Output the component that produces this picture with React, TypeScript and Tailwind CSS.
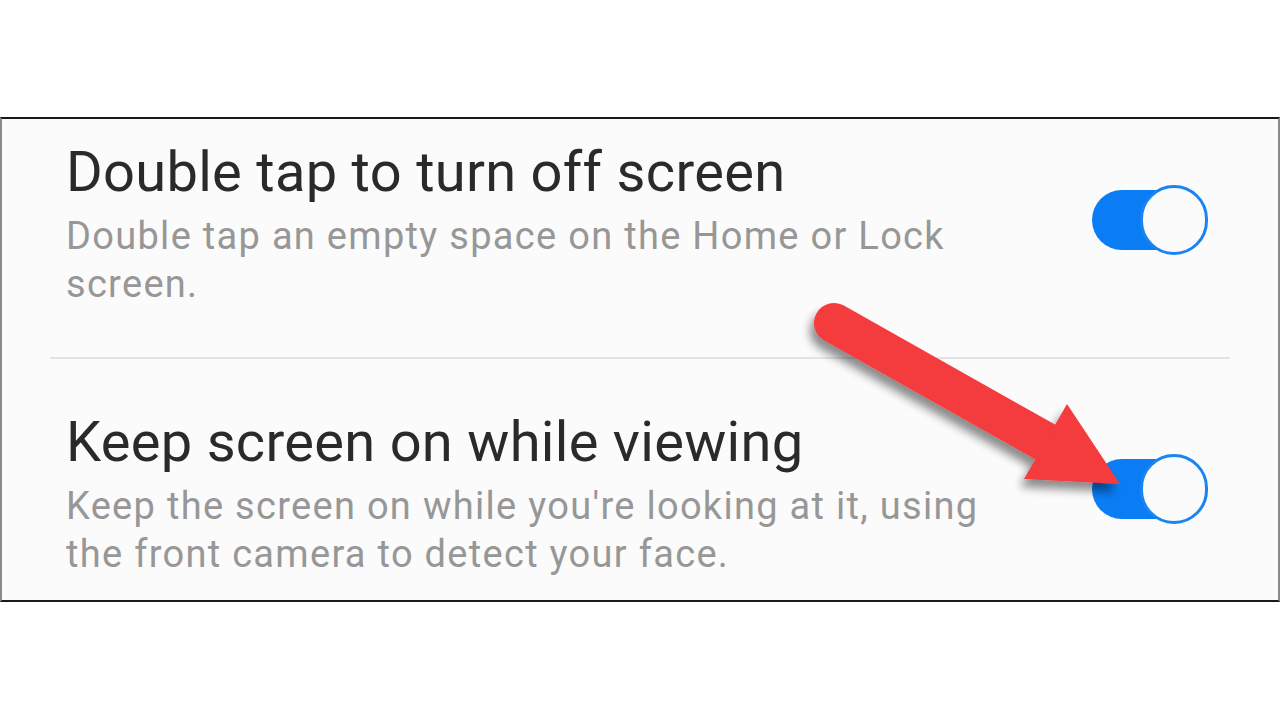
import React from "react";

function Toggle() {
  return (
    <div className="relative w-[116px] h-[70px] flex items-center">
      <div className="w-[100px] h-[60px] rounded-full bg-[#0a7df5]" />
      <div className="absolute right-0 top-0 w-[68px] h-[70px] rounded-full bg-[#fbfbfb] border-[3px] border-[#1a84f2]" />
    </div>
  );
}

export default function App() {
  return (
    <div className="w-[1280px] h-[719px] bg-white flex flex-col pt-[117px]" style={{ fontFamily: "Roboto, 'Noto Sans', sans-serif" }}>
      <div className="relative h-[485px] border-y-[2px] border-[#1a1a1a] border-x-[2px] border-x-[#8a8a8a] bg-[#fbfbfb] flex flex-col">
        <div className="h-[238px] flex items-start justify-between pt-[20px] pl-[64px] pr-[70px]">
          <div className="flex flex-col">
            <div className="text-[56px] leading-[66px] tracking-[0.3px] text-[#2a2a2a]">Double tap to turn off screen</div>
            <div className="text-[38px] leading-[48px] tracking-[1.3px] text-[#979797] mt-[7px]">
              <div>Double tap an empty space on the Home or Lock</div>
              <div>screen.</div>
            </div>
          </div>
          <div className="mt-[46px]"><Toggle /></div>
        </div>
        <div className="mx-[48px] h-[2px] bg-[#e4e4e4]" />
        <div className="flex-1 flex items-start justify-between pt-[50px] pl-[64px] pr-[70px]">
          <div className="flex flex-col">
            <div className="text-[56px] leading-[66px] tracking-[0.3px] text-[#2a2a2a]">Keep screen on while viewing</div>
            <div className="text-[38px] leading-[48px] tracking-[1.3px] text-[#979797] mt-[7px]">
              <div>Keep the screen on while you're looking at it, using</div>
              <div>the front camera to detect your face.</div>
            </div>
          </div>
          <div className="mt-[45px]"><Toggle /></div>
        </div>
        <svg className="absolute left-0 top-0 pointer-events-none" width="1280" height="485" viewBox="0 118 1280 485">
          <defs>
            <filter id="sh" x="-20%" y="-20%" width="140%" height="140%">
              <feGaussianBlur in="SourceAlpha" stdDeviation="5" />
              <feOffset dx="-4" dy="8" />
              <feComponentTransfer><feFuncA type="linear" slope="0.45" /></feComponentTransfer>
              <feMerge><feMergeNode /><feMergeNode in="SourceGraphic" /></feMerge>
            </filter>
          </defs>
          <g filter="url(#sh)">
            <line x1="832" y1="322" x2="1045" y2="442" stroke="#f43a3c" strokeWidth="40" strokeLinecap="round" />
            <polygon points="1065,403 1022,478 1118,483" fill="#f43a3c" />
          </g>
        </svg>
      </div>
    </div>
  );
}
